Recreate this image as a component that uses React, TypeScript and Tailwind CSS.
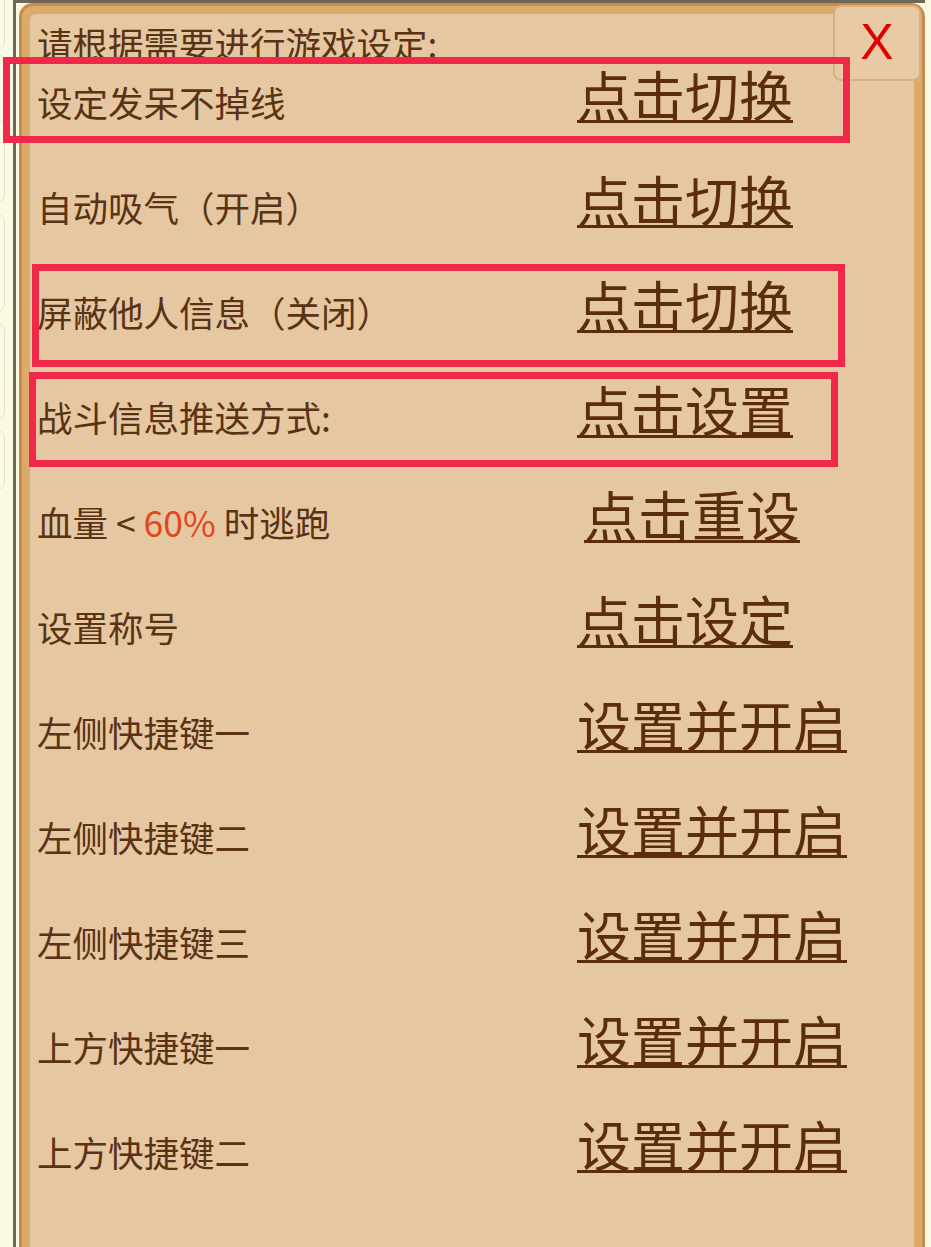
import React from "react"

type Row = {
  label: React.ReactNode
  action: string
  shift?: boolean
}

const rows: Row[] = [
  { label: "设定发呆不掉线", action: "点击切换" },
  { label: "自动吸气（开启）", action: "点击切换" },
  { label: "屏蔽他人信息（关闭）", action: "点击切换" },
  { label: "战斗信息推送方式:", action: "点击设置" },
  {
    label: (
      <>
        血量 &lt; <span className="text-[#e2461b]">60%</span> 时逃跑
      </>
    ),
    action: "点击重设",
    shift: true,
  },
  { label: "设置称号", action: "点击设定" },
  { label: "左侧快捷键一", action: "设置并开启" },
  { label: "左侧快捷键二", action: "设置并开启" },
  { label: "左侧快捷键三", action: "设置并开启" },
  { label: "上方快捷键一", action: "设置并开启" },
  { label: "上方快捷键二", action: "设置并开启" },
]

// highlighted rows (red frames drawn on top)
const marks = [
  "left-[3px] top-[57px] w-[847px] h-[86px]",
  "left-[32px] top-[264px] w-[813px] h-[103px]",
  "left-[29px] top-[372px] w-[809px] h-[95px]",
]

export default function App() {
  return (
    <div className="relative w-[931px] h-[1247px] overflow-hidden bg-[#fbf8e4] flex font-['Noto_Sans_CJK_SC','Noto_Sans',sans-serif]">
      {/* edge of the list behind the dialog */}
      <div className="w-[13px] shrink-0 flex flex-col">
        <div className="-ml-[20px] w-[25px] h-[60px] -mt-[10px] rounded-[8px] border border-[#e6dfc2]" />
        <div className="-ml-[20px] w-[25px] h-[83px] mt-[70px] rounded-[8px] border border-[#e6dfc2]" />
        <div className="-ml-[20px] w-[25px] h-[98px] mt-[11px] rounded-[8px] border border-[#e6dfc2]" />
        <div className="-ml-[20px] w-[25px] h-[97px] mt-[11px] rounded-[8px] border border-[#e6dfc2]" />
        <div className="-ml-[20px] w-[25px] h-[60px] mt-[10px] rounded-[8px] border border-[#e6dfc2]" />
      </div>

      <div className="flex-1 mr-[6px] border-l-[3px] border-t-[3px] border-[#6c6757] pl-[3px]">
        <div className="h-full rounded-t-[14px] border-[3px] border-b-0 border-[#c68c4e] bg-[#dcaa6b] p-[8px] pb-0">
          <div className="h-full rounded-t-[6px] bg-[#e5c7a1] text-[#5a3214]">
            <div className="h-[27px] pl-[7px] pt-[12px] text-[35.5px] leading-[34px] whitespace-nowrap">
              请根据需要进行游戏设定:
            </div>
            {rows.map((row, i) => (
              <div key={i} className="h-[105px] flex items-center pl-[7px]">
                <div className="flex items-baseline">
                  <div className="w-[540px] text-[35.5px] leading-[40px] whitespace-nowrap">{row.label}</div>
                  <div
                    className={
                      "text-[54px] leading-[60px] text-[#5c2c0e] underline decoration-[3px] underline-offset-[3px] whitespace-nowrap" +
                      (row.shift ? " ml-[7px]" : "")
                    }
                  >
                    {row.action}
                  </div>
                </div>
              </div>
            ))}
          </div>
        </div>
      </div>

      {/* close button */}
      <div className="absolute left-[833px] top-[5px] w-[88px] h-[76px] rounded-[8px] border-2 border-[#d7b183] bg-[#e8caa4] flex items-center justify-center">
        <span className="text-[#e00000] text-[50px] leading-none font-['Liberation_Sans',sans-serif] -mt-[2px]">X</span>
      </div>

      {marks.map((m, i) => (
        <div key={i} className={"absolute border-[7px] border-[#f0284a] " + m} />
      ))}
    </div>
  )
}
